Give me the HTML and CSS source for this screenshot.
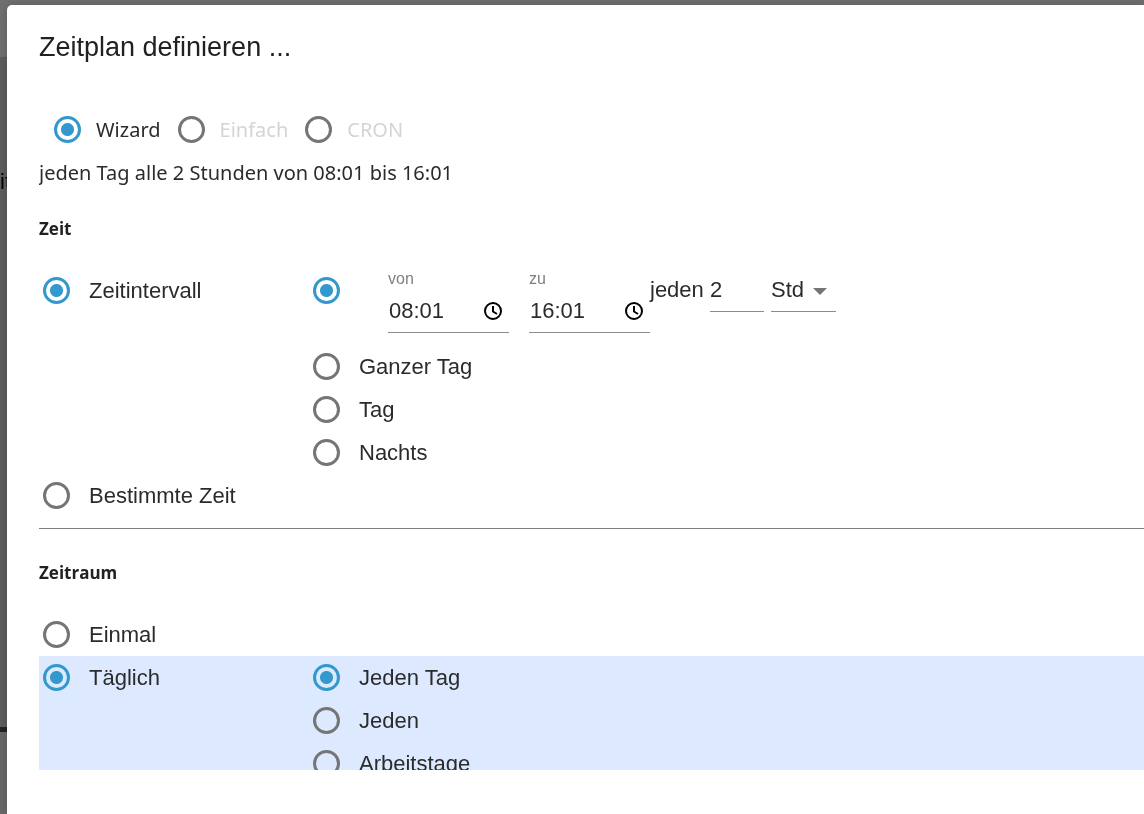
FILE: index.html
```html
<!DOCTYPE html>
<html lang="de">
<head>
<meta charset="UTF-8">
<meta name="viewport" content="width=device-width, initial-scale=1.0">
<title>Zeitplan definieren</title>
<link rel="stylesheet" href="styles.css">
</head>
<body>
    <!-- dimmed page behind the dialog -->
    <div class="backdrop" aria-hidden="true">
        <div class="backdrop-bar"></div>
        <div class="backdrop-page">it</div>
        <div class="backdrop-footer"></div>
    </div>

    <div class="dialog" role="dialog" aria-labelledby="dialogTitle">
        <h1 id="dialogTitle">Zeitplan definieren ...</h1>

        <form class="content">
            <div class="modes">
                <label class="option"><input type="radio" name="mode" checked> Wizard</label>
                <label class="option muted"><input type="radio" name="mode"> Einfach</label>
                <label class="option muted"><input type="radio" name="mode"> CRON</label>
            </div>
            <p class="summary">jeden Tag alle 2 Stunden von 08:01 bis 16:01</p>

            <h2>Zeit</h2>
            <div class="row">
                <label class="option"><input type="radio" name="time" checked> Zeitintervall</label>
                <div class="choices">
                    <div class="interval">
                        <input type="radio" name="interval" aria-label="Intervall" checked>
                        <div class="fields">
                            <div class="field">
                                <label for="from">von</label>
                                <div class="field-box">
                                    <input type="text" id="from" value="08:01">
                                    <svg class="clock" viewBox="0 0 20 20"><circle cx="10" cy="10" r="8"/><path d="M10 5v5.5l4 2.5"/></svg>
                                </div>
                            </div>
                            <div class="field">
                                <label for="to">zu</label>
                                <div class="field-box">
                                    <input type="text" id="to" value="16:01">
                                    <svg class="clock" viewBox="0 0 20 20"><circle cx="10" cy="10" r="8"/><path d="M10 5v5.5l4 2.5"/></svg>
                                </div>
                            </div>
                        </div>
                        <div class="every">
                            <label for="every">jeden</label>
                            <input type="text" id="every" value="2">
                            <div class="unit">
                                <select aria-label="Einheit">
                                    <option>Std</option>
                                    <option>Min</option>
                                </select>
                                <svg class="caret" viewBox="0 0 14 7"><path d="M0 0h14L7 7z"/></svg>
                            </div>
                        </div>
                    </div>
                    <label class="option"><input type="radio" name="interval"> Ganzer Tag</label>
                    <label class="option"><input type="radio" name="interval"> Tag</label>
                    <label class="option"><input type="radio" name="interval"> Nachts</label>
                </div>
            </div>
            <div class="row">
                <label class="option"><input type="radio" name="time"> Bestimmte Zeit</label>
            </div>
            <hr>

            <h2>Zeitraum</h2>
            <div class="row">
                <label class="option"><input type="radio" name="period"> Einmal</label>
            </div>
            <div class="row selected">
                <label class="option"><input type="radio" name="period" checked> Täglich</label>
                <div class="choices">
                    <label class="option"><input type="radio" name="daily" checked> Jeden Tag</label>
                    <label class="option"><input type="radio" name="daily"> Jeden</label>
                    <label class="option"><input type="radio" name="daily"> Arbeitstage</label>
                </div>
            </div>
        </form>
    </div>
</body>
</html>
```
FILE: styles.css
```css
* {
    box-sizing: border-box;
}

body {
    margin: 0;
    font-family: "Liberation Sans", Arial, sans-serif;
    font-size: 22px;
    color: #2b2b2b;
    background-color: #5e5e5e;
    overflow: hidden;
}

.backdrop {
    position: fixed;
    inset: 0;
    display: flex;
    flex-direction: column;
}

.backdrop-bar {
    height: 57px;
    background-color: #707070;
}

.backdrop-page {
    flex: 1;
    padding-top: 112px;
    line-height: 26px;
    color: #000;
    border-bottom: 5px solid #242424;
}

.backdrop-footer {
    height: 82px;
    background-color: #696969;
}

.dialog {
    position: relative;
    display: flex;
    flex-direction: column;
    height: calc(100vh - 5px);
    margin: 5px 0 0 7px;
    padding: 24px 0 44px 32px;
    background-color: #fff;
    border-radius: 5px 0 0 0;
    box-shadow: 0 0 12px rgba(0, 0, 0, 0.2);
}

h1 {
    margin: 0 0 43px;
    font-size: 27px;
    line-height: 36px;
    font-weight: normal;
    color: #212121;
}

h2 {
    margin: 0;
    font-family: "Open Sans", sans-serif;
    font-size: 17px;
    line-height: 24px;
    font-weight: bold;
    color: #212121;
}

.content {
    flex: 1;
    min-height: 0;
    overflow: hidden;
}

.modes {
    display: flex;
    gap: 13px;
    padding-left: 11px;
    font-family: "Noto Sans", sans-serif;
    font-size: 20px;
}

.modes .option {
    gap: 15px;
}

.muted {
    color: #d4d4d4;
}

.summary {
    margin: 0 0 22px;
    font-family: "Noto Sans", sans-serif;
    font-size: 20px;
    line-height: 44px;
}

.option {
    display: flex;
    align-items: center;
    gap: 19px;
    height: 43px;
    padding-left: 4px;
}

input[type="radio"] {
    appearance: none;
    flex: none;
    width: 27px;
    height: 27px;
    margin: 0;
    border: 3px solid #757575;
    border-radius: 50%;
}

input[type="radio"]:checked {
    border-color: #39c;
    background: radial-gradient(circle, #39c 6px, transparent 7px);
}

.row {
    display: grid;
    grid-template-columns: 270px 1fr;
}

h2 + .row {
    margin-top: 28px;
}

.selected {
    background-color: #dde9ff;
}

.interval {
    display: flex;
    height: 76px;
    padding-left: 4px;
}

.interval > input[type="radio"] {
    margin: 8px 48px 0 0;
}

.fields {
    display: flex;
    gap: 20px;
}

.field {
    width: 121px;
}

.field label {
    display: block;
    font-size: 16px;
    line-height: 20px;
    color: #808080;
}

.field-box {
    display: flex;
    align-items: center;
    height: 44px;
    border-bottom: 1px solid #8c8c8c;
}

input[type="text"],
select {
    width: 100%;
    min-width: 0;
    padding: 0 0 0 1px;
    border: none;
    background: none;
    font: inherit;
    color: inherit;
    outline: none;
}

.clock {
    flex: none;
    width: 20px;
    height: 20px;
    margin-right: 6px;
    fill: none;
    stroke: #000;
    stroke-width: 2;
}

.every {
    display: flex;
    height: 43px;
    line-height: 42px;
}

.every label {
    width: 60px;
}

.every > input[type="text"] {
    width: 54px;
    padding: 0;
    border-bottom: 1px solid #8c8c8c;
}

.unit {
    position: relative;
    width: 65px;
    margin-left: 7px;
    border-bottom: 1px solid #8c8c8c;
}

.unit select {
    appearance: none;
    height: 42px;
    padding: 0;
}

.caret {
    position: absolute;
    top: 19px;
    right: 9px;
    width: 14px;
    height: 7px;
    fill: #757575;
    pointer-events: none;
}

hr {
    margin: 11px 0 32px;
    border: none;
    border-top: 1px solid #808080;
}
```
